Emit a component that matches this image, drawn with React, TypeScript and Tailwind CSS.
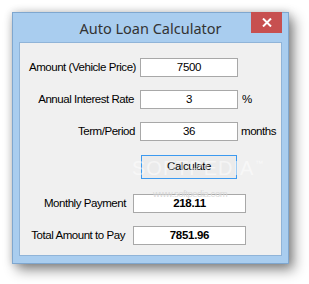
import React from "react";

const ui = { fontFamily: '"Liberation Sans", Arial, sans-serif' };

function Field({ value, bold, w }: { value: string; bold?: boolean; w: string }) {
  return (
    <div
      className={`${w} h-[19px] bg-white border border-[#a8a8a8] flex items-center justify-center text-[11.5px] tracking-[-0.3px] text-black leading-none whitespace-nowrap ${bold ? "font-bold" : ""}`}
      style={ui}
    >
      {value}
    </div>
  );
}

export default function App() {
  return (
    <div className="w-[309px] h-[284px] bg-white pl-[12px] pt-[12px] overflow-hidden">
      <div className="w-[277px] h-[252px] bg-[#a9cdef] border border-[#7fa7cf] flex flex-col shadow-[0_0_8px_rgba(0,0,0,0.18),5px_6px_12px_rgba(0,0,0,0.45)]">
        <div className="relative h-[29px] flex items-center justify-center">
          <span
            className="text-[14.5px] text-[#333333] leading-none pt-[1px]"
            style={{ fontFamily: '"Noto Sans", "Open Sans", sans-serif' }}
          >
            Auto Loan Calculator
          </span>
          <div className="absolute right-[6px] top-[-1px] w-[31px] h-[21px] bg-[#c75050] flex items-center justify-center">
            <svg width="10" height="9" viewBox="0 0 10 9">
              <path d="M1 0.5 L9 8.5 M9 0.5 L1 8.5" stroke="white" strokeWidth="2" />
            </svg>
          </div>
        </div>
        <div
          className="relative mx-[6px] mb-[7px] flex-1 border border-[#90b4d8] bg-[#f0f0f0] text-[11.5px] tracking-[-0.45px] text-black whitespace-nowrap"
          style={ui}
        >
          <div className="flex flex-col">
            <div className="flex items-center mt-[15px]">
              <div className="w-[116px] text-right leading-none">Amount (Vehicle Price)</div>
              <div className="ml-[4px]"><Field value="7500" w="w-[98px]" /></div>
            </div>
            <div className="flex items-center mt-[13px]">
              <div className="w-[114px] text-right leading-none">Annual Interest Rate</div>
              <div className="ml-[6px]"><Field value="3" w="w-[98px]" /></div>
              <div className="ml-[4px] leading-none">%</div>
            </div>
            <div className="flex items-center mt-[13px]">
              <div className="w-[115px] text-right leading-none">Term/Period</div>
              <div className="ml-[5px]"><Field value="36" w="w-[98px]" /></div>
              <div className="ml-[3px] leading-none">months</div>
            </div>
            <div className="flex mt-[14px] pl-[121px]">
              <div className="w-[96px] h-[24px] bg-[#ebebeb] border border-[#3c9af0] flex items-center justify-center leading-none">
                Calculate
              </div>
            </div>
            <div className="flex items-center mt-[15px]">
              <div className="w-[106px] text-right leading-none">Monthly Payment</div>
              <div className="ml-[7px]"><Field value="218.11" bold w="w-[113px]" /></div>
            </div>
            <div className="flex items-center mt-[13px]">
              <div className="w-[105px] text-right leading-none">Total Amount to Pay</div>
              <div className="ml-[8px]"><Field value="7851.96" bold w="w-[113px]" /></div>
            </div>
          </div>
          <div
            className="absolute left-[112px] top-[115px] text-[20px] tracking-[1px] text-white/50 leading-none pointer-events-none"
            style={ui}
          >
            SOFTPEDIA
          </div>
          <div className="absolute left-[235px] top-[117px] text-[8px] text-white/60 leading-none pointer-events-none">™</div>
          <div
            className="absolute left-[133px] top-[146px] text-[9.5px] text-[#d8d8d8] leading-none pointer-events-none"
            style={ui}
          >
            www.softpedia.com
          </div>
        </div>
      </div>
    </div>
  );
}
